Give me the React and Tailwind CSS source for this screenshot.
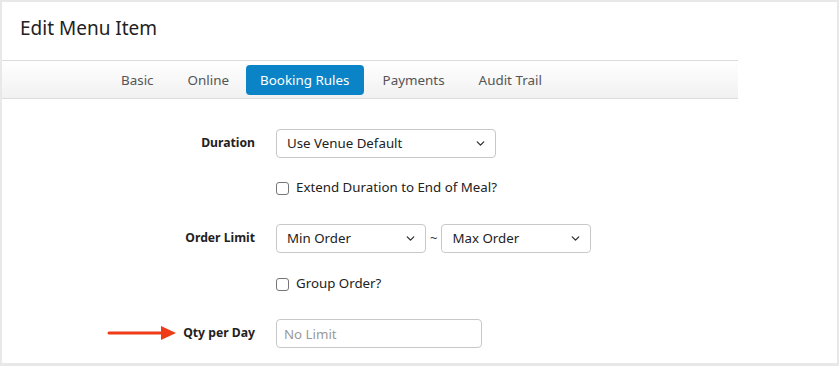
import { ChevronDown } from 'lucide-react'

const FONT = { fontFamily: '"Noto Sans", "Open Sans", sans-serif' }

const tabs = ['Basic', 'Online', 'Booking Rules', 'Payments', 'Audit Trail']

function Select({ label, width }) {
  return (
    <div className={`${width} h-[29px] border border-[#c8c8c8] rounded-[4px] bg-white flex items-center justify-between pl-[10px] pr-[8px] text-[13.3px] text-[#222]`}>
      <span>{label}</span>
      <ChevronDown size={13} strokeWidth={2.5} className="text-[#333]" />
    </div>
  )
}

function Check({ label }) {
  return (
    <label className="flex items-center gap-[7px] text-[13.3px] text-[#222]">
      <span className="w-[13px] h-[13px] border border-[#767676] rounded-[3px] bg-white" />
      {label}
    </label>
  )
}

function Row({ label, children, className = '' }) {
  return (
    <div className={`flex items-center ${className}`}>
      <div className="w-[253px] text-right text-[12.2px] font-bold text-[#222] relative">
        {label}
      </div>
      <div className="ml-[21px] flex items-center">{children}</div>
    </div>
  )
}

export default function App() {
  return (
    <div className="w-[839px] h-[366px] bg-[#e8e8e8] pt-[2px] pl-[2px] pr-[2px] overflow-hidden" style={FONT}>
      <div className="w-[835px] h-[361px] bg-white">
        <div className="h-[58px] flex items-center pl-[18px] pb-[5px]">
          <h1 className="text-[19px] text-[#222]">Edit Menu Item</h1>
        </div>

        <div className="w-[736px] h-[39px] border-y border-[#dcdcdc] bg-gradient-to-b from-white to-[#f1f1f1] flex items-center pl-[102px] pt-[1px]">
          {tabs.map((t) =>
            t === 'Booking Rules' ? (
              <span key={t} className="h-[30px] px-[14px] mr-[2px] flex items-center rounded-[4px] bg-[#0a84c6] text-white text-[13.4px]">{t}</span>
            ) : (
              <span key={t} className="px-[17px] text-[13.4px] text-[#555]">{t}</span>
            )
          )}
        </div>

        <div className="pt-[30px]">
          <Row label="Duration">
            <Select label="Use Venue Default" width="w-[220px]" />
          </Row>
          <Row className="mt-[20px] h-[20px]">
            <Check label="Extend Duration to End of Meal?" />
          </Row>
          <Row label="Order Limit" className="mt-[26px]">
            <Select label="Min Order" width="w-[150px]" />
            <span className="mx-[4px] text-[13px] text-[#333]">~</span>
            <Select label="Max Order" width="w-[150px]" />
          </Row>
          <Row className="mt-[21px] h-[20px]">
            <Check label="Group Order?" />
          </Row>
          <Row
            className="mt-[25px]"
            label={
              <>
                <svg className="absolute left-[105px] top-1/2 -translate-y-1/2" width="70" height="14" viewBox="0 0 70 14">
                  <line x1="2" y1="7" x2="56" y2="7" stroke="#f03a17" strokeWidth="3" strokeLinecap="round" />
                  <polygon points="54,0 69,7 54,14" fill="#f03a17" />
                </svg>
                Qty per Day
              </>
            }
          >
            <input
              placeholder="No Limit"
              className="w-[206px] h-[29px] border border-[#c8c8c8] rounded-[4px] px-[7px] text-[13.3px] text-[#222] placeholder:text-[#999] outline-none"
              style={FONT}
            />
          </Row>
        </div>
      </div>
    </div>
  )
}
